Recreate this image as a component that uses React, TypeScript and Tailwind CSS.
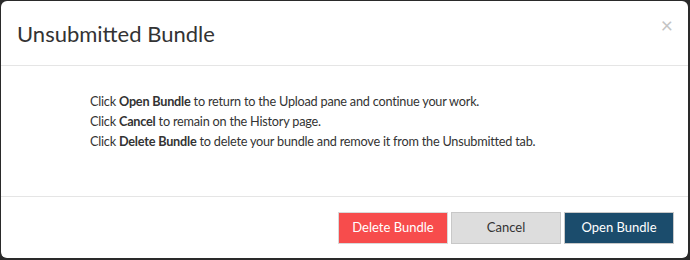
import React from "react";

export default function App() {
  return (
    <div className="w-[690px] h-[260px] bg-[#2a2a2a] pt-px pl-px pr-[2px] pb-[2px]" style={{ fontFamily: "Lato, 'Open Sans', sans-serif" }}>
      <div className="h-full w-full bg-white rounded-[6px] flex flex-col">
        <div className="h-[65px] border-b border-[#e5e5e5] flex items-center justify-between pl-[16px] pr-[15px]">
          <h4 className="text-[22px] text-[#333] leading-none pt-[2px]">Unsubmitted Bundle</h4>
          <span className="text-[#c4c4c4] text-[21px] leading-none -mt-[18px]">×</span>
        </div>
        <div className="flex-1 pl-[89px] pt-[25px] text-[12.7px] tracking-[-0.22px] text-[#333] leading-[20px]">
          <p>Click <b>Open Bundle</b> to return to the Upload pane and continue your work.</p>
          <p>Click <b>Cancel</b> to remain on the History page.</p>
          <p>Click <b>Delete Bundle</b> to delete your bundle and remove it from the Unsubmitted tab.</p>
        </div>
        <div className="h-[62px] border-t border-[#e5e5e5] flex items-start justify-end gap-[3px] pt-[15px] pr-[14px]">
          <button className="w-[110px] h-[32px] bg-[#f74c4c] border border-[#d9d9d9] text-white text-[13px]">Delete Bundle</button>
          <button className="w-[110px] h-[32px] bg-[#dddddd] border border-[#c8c8c8] text-[#333] text-[13px]">Cancel</button>
          <button className="w-[110px] h-[32px] bg-[#1b4c6c] border border-[#c8c8c8] text-white text-[13px]">Open Bundle</button>
        </div>
      </div>
    </div>
  );
}
